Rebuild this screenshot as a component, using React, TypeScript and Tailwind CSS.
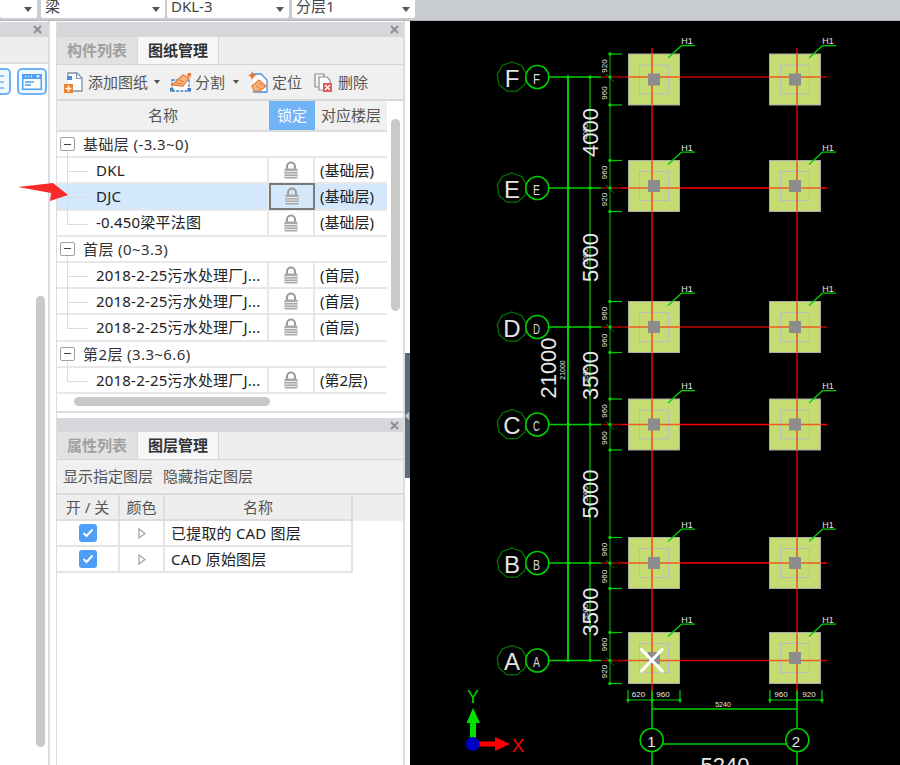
import React from "react";

const font = { fontFamily: '"Noto Sans","Noto Sans CJK SC",sans-serif' };

function Lock() {
  return (
    <svg width="16" height="18" viewBox="0 0 16 18">
      <path d="M4 8V5.5a4 4 0 0 1 8 0V8" fill="none" stroke="#9a9a9a" strokeWidth="2" />
      <rect x="1.5" y="7.5" width="13" height="10" rx="1" fill="#a8a8a8" />
      <path d="M2 10.5h12M2 13h12M2 15.5h12" stroke="#ececec" strokeWidth="1" />
    </svg>
  );
}

function Caret() {
  return <span className="w-0 h-0 border-x-[3.5px] border-x-transparent border-t-[4px] border-t-[#555]" />;
}

function DropCaret() {
  return <span className="w-0 h-0 border-x-[4px] border-x-transparent border-t-[5px] border-t-[#555]" />;
}

function AddIcon() {
  return (
    <svg width="19" height="21" viewBox="0 0 19 21" className="shrink-0">
      <path d="M4 8V1h9l5 5v13H9" fill="#fff" stroke="#7e93a8" strokeWidth="1.3" />
      <path d="M12.5 1v5.5H18" fill="none" stroke="#7e93a8" strokeWidth="1.2" />
      <path d="M3 4h5v4H3z" fill="#4a90d9" />
      <rect x="0" y="12" width="9" height="9" fill="#f0812c" />
      <path d="M4.5 13.5v6M1.5 16.5h6" stroke="#fff" strokeWidth="1.5" />
    </svg>
  );
}

function SplitIcon() {
  return (
    <svg width="21" height="20" viewBox="0 0 21 20" className="shrink-0">
      <path d="M2 8h17v11H2z" fill="#fff" stroke="#3f7fc4" strokeWidth="1.3" strokeDasharray="3 1.2" />
      <path d="M2 13 13 3l6 3-6 8z" fill="#f6b48a" stroke="#e9772c" strokeWidth="1.2" />
      <path d="M6 11l6 1M9 8l5 2" stroke="#e9772c" strokeWidth="1" />
      <rect x="0" y="16" width="3.5" height="3.5" fill="#3f7fc4" />
      <rect x="17.5" y="16" width="3.5" height="3.5" fill="#3f7fc4" />
      <rect x="17.5" y="1" width="3.5" height="3.5" fill="#e9772c" />
    </svg>
  );
}

function LocateIcon() {
  return (
    <svg width="20" height="22" viewBox="0 0 20 22" className="shrink-0">
      <path d="M5 7V3h8l6 6v12H5" fill="#fff" stroke="#4a90d9" strokeWidth="1.3" />
      <path d="M4 15l7-6 7 6-6 5H6z" fill="#f6b48a" stroke="#e9772c" strokeWidth="1.1" />
      <path d="M8 15l5 3M10 12l5 3" stroke="#e9772c" strokeWidth="1" />
      <path d="M4 0l1.2 3.2L8.5 4.5 5.2 5.8 4 9 2.8 5.8 0 4.5l2.8-1.3z" fill="#e9772c" />
    </svg>
  );
}

function DeleteIcon() {
  return (
    <svg width="18" height="19" viewBox="0 0 18 19" className="shrink-0">
      <path d="M1 1h9v13H1z" fill="#f4f4f4" stroke="#8e8e8e" strokeWidth="1.2" />
      <path d="M5 4h8l3 3v10H5z" fill="#fff" stroke="#8e8e8e" strokeWidth="1.2" />
      <rect x="9" y="10" width="9" height="9" fill="#dd5a5a" />
      <path d="M11 12l5 5M16 12l-5 5" stroke="#fff" strokeWidth="1.4" />
    </svg>
  );
}

function CloseX() {
  return (
    <svg width="9" height="9" viewBox="0 0 9 9">
      <path d="M1 1l7 7M8 1L1 8" stroke="#8a8d91" strokeWidth="1.8" />
    </svg>
  );
}

function Drop({ text, cls }: { text: string; cls: string }) {
  return (
    <div className={`${cls} h-[18px] bg-white flex items-center justify-between pl-[4px] pr-[5px] overflow-hidden rounded-b-[2px]`}>
      <span className="text-[15px] leading-[15px] text-[#444] -mt-[6px] whitespace-nowrap">{text}</span>
      <DropCaret />
    </div>
  );
}

type Row =
  | { kind: "group"; label: string }
  | { kind: "item"; name: string; floor: string; selected?: boolean; last?: boolean };

const rows: Row[] = [
  { kind: "group", label: "基础层 (-3.3~0)" },
  { kind: "item", name: "DKL", floor: "(基础层)" },
  { kind: "item", name: "DJC", floor: "(基础层)", selected: true },
  { kind: "item", name: "-0.450梁平法图", floor: "(基础层)", last: true },
  { kind: "group", label: "首层 (0~3.3)" },
  { kind: "item", name: "2018-2-25污水处理厂J...", floor: "(首层)" },
  { kind: "item", name: "2018-2-25污水处理厂J...", floor: "(首层)" },
  { kind: "item", name: "2018-2-25污水处理厂J...", floor: "(首层)", last: true },
  { kind: "group", label: "第2层 (3.3~6.6)" },
  { kind: "item", name: "2018-2-25污水处理厂J...", floor: "(第2层)", last: true },
];

function TreeRow({ row }: { row: Row }) {
  if (row.kind === "group") {
    return (
      <div className="h-[26.2px] flex items-center border-b-2 border-[#e8e8e8] relative">
        <span className="ml-[3px] w-[15px] h-[14px] border border-[#a0a0a0] rounded-[2px] flex items-center justify-center bg-white">
          <span className="w-[7px] h-px bg-[#444]" />
        </span>
        <span className="ml-[8px] mt-px text-[15px] tracking-[0.4px] text-[#333] whitespace-nowrap">{row.label}</span>
        <span className="absolute left-[10px] top-[20px] h-[8px] w-px bg-[#dcdcdc]" />
      </div>
    );
  }
  return (
    <div className={`h-[26.2px] flex items-center border-b-2 border-[#e8e8e8] ${row.selected ? "bg-[#d3e8fb]" : ""}`}>
      <div className="w-[212px] h-full relative flex items-center border-r-2 border-[#e8e8e8]">
        <span className={`absolute left-[10px] top-0 w-px bg-[#dcdcdc] ${row.last ? "h-[13px]" : "h-[28px]"}`} />
        <span className="absolute left-[10px] top-[13px] w-[21px] h-px bg-[#dcdcdc]" />
        <span className="ml-[39px] text-[15px] tracking-[0.2px] text-[#222] whitespace-nowrap">{row.name}</span>
      </div>
      <div className={`w-[46px] h-[calc(100%+2px)] flex items-center justify-center ${row.selected ? "border-2 border-[#7a7a7a]" : "border-r-2 border-[#e8e8e8]"}`}>
        <Lock />
      </div>
      <span className="ml-[5px] text-[15px] text-[#222] whitespace-nowrap">{row.floor}</span>
    </div>
  );
}

const rowYs = [
  { k: "F", y: 77, py: 79.5, t: ["920", "960"], oc: "#c00000" },
  { k: "E", y: 188, py: 186, t: ["960", "920"], oc: "#ff0000" },
  { k: "D", y: 327, py: 327, t: ["960", "960"], oc: "#c00000" },
  { k: "C", y: 424.5, py: 424.5, t: ["960", "960"], oc: "#ff0000" },
  { k: "B", y: 563, py: 563, t: ["960", "960"], oc: "#ff0000" },
  { k: "A", y: 660.5, py: 658, t: ["960", "920"], oc: "#d00000" },
];

const G = "#00d000";
const DG = "#008a00";
const OG = "#007a00";

function ninegon(cx: number, cy: number, r: number) {
  const pts: string[] = [];
  for (let i = 0; i < 9; i++) {
    const a = (-90 + i * 40) * (Math.PI / 180);
    pts.push(`${cx + r * Math.cos(a)},${cy + r * Math.sin(a)}`);
  }
  return pts.join(" ");
}

function VText({ x, y, size, text, fill = "#e8e8e8" }: { x: number; y: number; size: number; text: string; fill?: string }) {
  return (
    <text x={x} y={y} fontSize={size} fill={fill} textAnchor="middle" dominantBaseline="central" transform={`rotate(-90 ${x} ${y})`} fontFamily="Liberation Sans">
      {text}
    </text>
  );
}

function Pad({ x, y, lineX, lineY, thin }: { x: number; y: number; lineX: number; lineY: number; thin?: boolean }) {
  return (
    <g>
      <rect x={x - 25.5} y={y - 25.5} width={51} height={51} fill="#c4dc72" stroke="#a9a9a9" strokeWidth={1} />
      <rect x={x - 14.5} y={y - 14.5} width={29} height={29} fill="none" stroke="#bcbcbc" strokeWidth={1} />
      <line x1={lineX} x2={lineX} y1={y - 25.5} y2={y + 25.5} stroke={thin ? "#f03a20" : "#ee6a2a"} strokeWidth={thin ? 1.3 : 2} />
      <line x1={x - 25.5} x2={x + 25.5} y1={lineY} y2={lineY} stroke="#f05a24" strokeWidth={1.5} />
      <rect x={x - 6} y={y - 6} width={12} height={12} fill="#8c8c8c" />
      <polyline points={`${x + 14},${y - 21.5} ${x + 27.5},${y - 33.8} ${x + 41},${y - 33.8}`} fill="none" stroke={G} strokeWidth={1.3} />
      <text x={x + 33} y={y - 35.5} fontSize={9} fill="#e0e0e0" textAnchor="middle" fontFamily="Liberation Sans">H1</text>
    </g>
  );
}

function Cad() {
  return (
    <svg width="490" height="744" viewBox="410 21 490 744" className="block">
      <rect x={410} y={21} width={490} height={744} fill="#000" />
      <line x1={652} x2={652} y1={48} y2={692} stroke="#b00000" strokeWidth={2} />
      <line x1={797} x2={797} y1={48} y2={692} stroke="#ff0000" strokeWidth={1.3} />
      <line x1={568} x2={568} y1={77} y2={660.5} stroke={G} strokeWidth={2} />
      <line x1={590} x2={590} y1={77} y2={660.5} stroke={G} strokeWidth={1.2} />
      <line x1={610} x2={610} y1={54} y2={683} stroke={DG} strokeWidth={1.4} />
      {rowYs.map((r) => (
        <g key={r.k}>
          <line x1={622} x2={827} y1={r.y} y2={r.y} stroke={r.oc} strokeWidth={1.5} />
          <line x1={549} x2={601} y1={r.y} y2={r.y} stroke={G} strokeWidth={1.5} />
          <line x1={601} x2={622} y1={r.y} y2={r.y} stroke="#a00000" strokeWidth={1.5} />
          <line x1={606} x2={614} y1={r.y - 3} y2={r.y + 5} stroke={DG} strokeWidth={1} />
          <line x1={610} x2={622} y1={r.py - 25.5} y2={r.py - 25.5} stroke={G} strokeWidth={1.2} />
          <line x1={610} x2={622} y1={r.py + 25.5} y2={r.py + 25.5} stroke={G} strokeWidth={1.2} />
          <circle cx={610} cy={r.py - 25.5} r={1.8} fill={G} />
          <circle cx={610} cy={r.py + 25.5} r={1.8} fill={G} />
          <circle cx={610} cy={r.y} r={1.8} fill={G} />
          <circle cx={568} cy={r.y} r={1.8} fill={G} />
          <circle cx={590} cy={r.y} r={1.8} fill={G} />
          <polygon points={ninegon(512, r.y, 15)} fill="none" stroke={OG} strokeWidth={1.2} />
          <text x={512} y={r.y + 1} fontSize={24} fill="#e4e4e4" textAnchor="middle" dominantBaseline="central" fontFamily="Liberation Sans">{r.k}</text>
          <circle cx={537.3} cy={r.y} r={11.5} fill="#000" stroke={G} strokeWidth={1.6} />
          <text x={536.5} y={r.y + 1} fontSize={15} fill="#d8d8d8" textAnchor="middle" dominantBaseline="central" fontFamily="Liberation Sans" textLength={7} lengthAdjust="spacingAndGlyphs">{r.k}</text>
          <VText x={604} y={r.py - 13.5} size={8} text={r.t[0]} />
          <VText x={604} y={r.py + 13.5} size={8} text={r.t[1]} />
          <Pad x={654} y={r.py} lineX={652} lineY={r.y} />
          <Pad x={795} y={r.py} lineX={797} lineY={r.y} thin />
        </g>
      ))}
      <VText x={590} y={132.5} size={22} text="4000" />
      <VText x={590} y={257.5} size={22} text="5000" />
      <VText x={590} y={375.5} size={22} text="3500" />
      <VText x={590} y={494} size={22} text="5000" />
      <VText x={590} y={612} size={22} text="3500" />
      <VText x={548} y={368} size={22} text="21000" />
      <VText x={562} y={370} size={7} text="21000" />
      <VText x={585} y={132} size={7} text="4000" />
      <VText x={585} y={257} size={7} text="5000" />
      <VText x={585} y={375} size={7} text="3500" />
      <VText x={585} y={494} size={7} text="5000" />
      <VText x={585} y={612} size={7} text="3500" />
      <path d="M640.5 648.5L663 672M663 648.5L640.5 672" stroke="#fff" strokeWidth={3} />
      <path d="M628 700H680M628 690V703M680 690V703M652 690V703" stroke={G} strokeWidth={1.2} fill="none" />
      <path d="M770 700H822M770 690V703M822 690V703M797 690V703" stroke={G} strokeWidth={1.2} fill="none" />
      <path d="M652 709H797" stroke={G} strokeWidth={1.5} />
      <path d="M652 692V765M797 692V765" stroke={G} strokeWidth={1.5} />
      <path d="M660 744H786" stroke={G} strokeWidth={1.5} />
      {[628, 652, 680, 770, 797, 822].map((x) => (
        <circle key={x} cx={x} cy={700} r={1.6} fill={G} />
      ))}
      <text x={638.5} y={697} fontSize={8} fill="#e8e8e8" textAnchor="middle" fontFamily="Liberation Sans">620</text>
      <text x={663} y={697} fontSize={8} fill="#e8e8e8" textAnchor="middle" fontFamily="Liberation Sans">960</text>
      <text x={781} y={697} fontSize={8} fill="#e8e8e8" textAnchor="middle" fontFamily="Liberation Sans">960</text>
      <text x={809} y={697} fontSize={8} fill="#e8e8e8" textAnchor="middle" fontFamily="Liberation Sans">920</text>
      <text x={723} y={707} fontSize={7} fill="#e8e8e8" textAnchor="middle" fontFamily="Liberation Sans">5240</text>
      <circle cx={651.7} cy={740} r={11.5} fill="#000" stroke={G} strokeWidth={1.6} />
      <circle cx={797.3} cy={740} r={11.5} fill="#000" stroke={G} strokeWidth={1.6} />
      <text x={651.5} y={741} fontSize={15} fill="#e8e8e8" textAnchor="middle" dominantBaseline="central" fontFamily="Liberation Sans">1</text>
      <text x={796} y={741} fontSize={15} fill="#e8e8e8" textAnchor="middle" dominantBaseline="central" fontFamily="Liberation Sans">2</text>
      <text x={725} y={773} fontSize={22} fill="#e8e8e8" textAnchor="middle" fontFamily="Liberation Sans">5240</text>
      <rect x={470} y={722} width={6} height={20} fill="#00e000" />
      <polygon points="473,708 480,723 466.5,723" fill="#00e000" />
      <text x={473} y={697} fontSize={18} fill="#00d000" textAnchor="middle" dominantBaseline="central" fontFamily="Liberation Sans">Y</text>
      <rect x={476} y={741.5} width={20} height={5} fill="#ff0000" />
      <polygon points="495,737 510,744 495,751" fill="#ff0000" />
      <circle cx={472.7} cy={744} r={7} fill="#0000c0" />
      <text x={518} y={745} fontSize={19} fill="#ff0000" textAnchor="middle" dominantBaseline="central" fontFamily="Liberation Sans">X</text>
    </svg>
  );
}

function Tab({ text, active }: { text: string; active?: boolean }) {
  return (
    <div className={`w-[81px] h-full flex items-center justify-center text-[15px] font-bold border-r border-[#d8d8d8] ${active ? "bg-[#f6f6f6] text-[#333]" : "bg-[#e2e2e2] text-[#a0a0a0]"}`}>
      {text}
    </div>
  );
}

export default function App() {
  return (
    <div className="w-[900px] h-[765px] overflow-hidden bg-white flex flex-col relative" style={font}>
      {/* top bar */}
      <div className="h-[21px] shrink-0 bg-[#c9cdd1] flex items-start border-b border-[#b0b3b6]">
        <Drop text="" cls="w-[37px]" />
        <Drop text="梁" cls="w-[124px] ml-[4px]" />
        <Drop text="DKL-3" cls="w-[122px] ml-[2px]" />
        <Drop text="分层1" cls="w-[123px] ml-[3px]" />
      </div>

      <div className="flex flex-1 min-h-0">
        {/* left panel */}
        <div className="w-[50px] shrink-0 border-r-2 border-[#dcdcdc] flex flex-col overflow-hidden mr-[6px]">
          <div className="h-[15px] mt-px bg-[#d5d7da] flex items-center justify-end pr-[6px]"><CloseX /></div>
          <div className="h-[27px] bg-[#eeeeee] border-b-2 border-[#dcdcdc]" />
          <div className="flex justify-end gap-[6px] pr-px mt-[4px]">
            <div className="w-[28px] h-[27px] shrink-0 rounded-[5px] border-2 border-[#6db3f8] bg-[#eef6fe] flex items-center justify-end pr-[3px]">
              <svg width="12" height="16" viewBox="0 0 12 16"><path d="M0 2h10M0 8h10M0 14h10" stroke="#6db3f8" strokeWidth="1.6" /></svg>
            </div>
            <div className="w-[30px] h-[27px] shrink-0 rounded-[5px] border-2 border-[#6db3f8] bg-[#eef6fe] flex items-center justify-center">
              <svg width="20" height="16" viewBox="0 0 20 16">
                <rect x="0" y="0" width="20" height="16" fill="#4ea1f3" />
                <rect x="1.5" y="5" width="17" height="9.5" fill="#fff" />
                <path d="M3 2.5h1M6 2.5h1M9 2.5h1" stroke="#fff" strokeWidth="1.5" />
                <path d="M14 1.5h4l-2 2.5z" fill="#fff" />
                <path d="M3 8h9M3 11h6" stroke="#4ea1f3" strokeWidth="1.3" />
              </svg>
            </div>
          </div>
          <div className="w-[9px] h-[451px] ml-[36px] mt-[201px] rounded-[5px] bg-[#c9c9c9]" />
        </div>

        {/* main column */}
        <div className="w-[349px] shrink-0 flex flex-col border-l border-r-2 border-[#dcdcdc]">
          {/* upper panel */}
          <div className="h-[15px] mt-px shrink-0 bg-[#d5d7da] flex items-center justify-end pr-[4px]"><CloseX /></div>
          <div className="h-[28px] shrink-0 bg-[#eeeeee] flex border-b border-[#d4d4d4]"><Tab text="构件列表" /><Tab text="图纸管理" active /></div>
          <div className="h-[36px] shrink-0 bg-[#f0f0f0] border-b-2 border-[#d8d8d8] flex items-center pl-[7px] text-[15px] text-[#555]">
            <AddIcon /><span className="ml-[5px]">添加图纸</span>
            <span className="ml-[6px] flex"><Caret /></span>
            <span className="ml-[10px]"><SplitIcon /></span><span className="ml-[4px]">分割</span>
            <span className="ml-[8px] flex"><Caret /></span>
            <span className="ml-[9px]"><LocateIcon /></span><span className="ml-[4px]">定位</span>
            <span className="ml-[12px]"><DeleteIcon /></span><span className="ml-[6px]">删除</span>
          </div>
          <div className="flex h-[310px] shrink-0">
            <div className="w-[330px] shrink-0 flex flex-col">
              <div className="h-[293px] shrink-0 overflow-hidden">
                <div className="h-[31px] flex text-[15px] bg-[#f0f0f0] border-b-2 border-[#dcdcdc] text-[#555]">
                  <div className="w-[212px] flex items-center justify-center">名称</div>
                  <div className="w-[46px] flex items-center justify-center bg-[#70b3f7] text-white">锁定</div>
                  <div className="flex-1 flex items-center justify-center whitespace-nowrap">对应楼层</div>
                </div>
                {rows.map((r, i) => <TreeRow key={i} row={r} />)}
              </div>
              <div className="w-[196px] h-[9px] ml-[17px] mt-[3px] rounded-[5px] bg-[#c9c9c9]" />
            </div>
            <div className="ml-[4px] mt-[18px] w-[9px] h-[192px] rounded-[5px] bg-[#c9c9c9]" />
          </div>
          <div className="h-[7px] shrink-0 border-t-2 border-[#dcdcdc] -mx-px" />
          {/* lower panel */}
          <div className="h-[14px] shrink-0 bg-[#d5d7da] flex items-center justify-end pr-[4px]"><CloseX /></div>
          <div className="h-[28px] shrink-0 bg-[#eeeeee] flex border-b border-[#d4d4d4]"><Tab text="属性列表" /><Tab text="图层管理" active /></div>
          <div className="h-[35px] shrink-0 bg-[#f0f0f0] border-b-2 border-[#dcdcdc] flex items-center pl-[6px] gap-[10px] text-[15px] text-[#555]">
            <span>显示指定图层</span><span>隐藏指定图层</span>
          </div>
          <div className="h-[26px] shrink-0 bg-[#eeeeee] flex text-[15px] text-[#555]">
            <div className="w-[63px] flex items-center justify-center border-r-2 border-b-2 border-[#dcdcdc] whitespace-nowrap">开 / 关</div>
            <div className="w-[45px] flex items-center justify-center border-r-2 border-b-2 border-[#dcdcdc]">颜色</div>
            <div className="w-[188px] flex items-center justify-center border-r-2 border-b-2 border-[#dcdcdc]">名称</div>
          </div>
          {["已提取的 CAD 图层", "CAD 原始图层"].map((t) => (
            <div key={t} className="h-[26px] shrink-0 w-[296px] flex text-[15px] text-[#222] border-r-2 border-b-2 border-[#e4e4e4]">
              <div className="w-[63px] flex items-center justify-center border-r-2 border-[#e4e4e4]">
                <span className="w-[18px] h-[18px] rounded-[3px] bg-[#4d9ef7] flex items-center justify-center">
                  <svg width="12" height="10" viewBox="0 0 12 10"><path d="M1.5 5l3 3 6-6.5" fill="none" stroke="#fff" strokeWidth="2" /></svg>
                </span>
              </div>
              <div className="w-[45px] flex items-center justify-center border-r-2 border-[#e4e4e4]">
                <svg width="8" height="11" viewBox="0 0 8 11"><path d="M1 1l6 4.5L1 10z" fill="#fff" stroke="#a0a0a0" strokeWidth="1.2" /></svg>
              </div>
              <div className="flex-1 flex items-center pl-[6px] tracking-[0.2px] whitespace-nowrap">{t}</div>
            </div>
          ))}
        </div>

        {/* divider */}
        <div className="w-[5px] shrink-0 flex flex-col bg-white">
          <div className="mt-[332px] h-[125px] bg-[#5f6b76] flex items-center">
            <span className="w-0 h-0 border-y-[4px] border-y-transparent border-r-[4px] border-r-[#c9ced3]" />
          </div>
        </div>

        <Cad />
      </div>

      {/* annotation arrow */}
      <svg width="52" height="20" viewBox="0 0 52 20" className="absolute left-[18px] top-[183px]">
        <polygon points="0,4 35,0 50,12 32,18 33,10" fill="#fb2a2a" />
      </svg>
    </div>
  );
}
